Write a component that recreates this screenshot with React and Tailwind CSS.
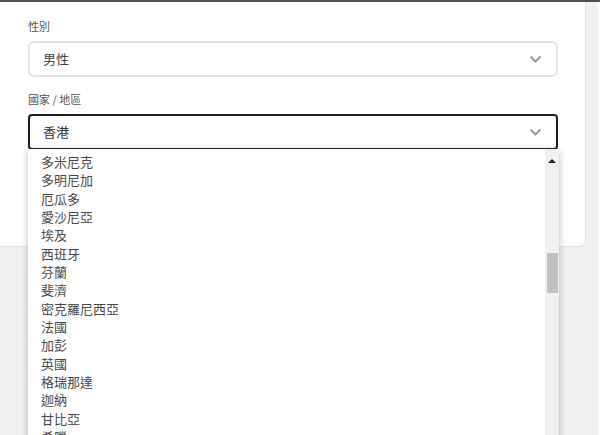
import React from "react";

const countries = [
  "多米尼克",
  "多明尼加",
  "厄瓜多",
  "愛沙尼亞",
  "埃及",
  "西班牙",
  "芬蘭",
  "斐濟",
  "密克羅尼西亞",
  "法國",
  "加彭",
  "英國",
  "格瑞那達",
  "迦納",
  "甘比亞",
  "希臘",
  "幾內亞",
];

function Chevron() {
  return (
    <svg width="13" height="8" viewBox="0 0 13 8" className="shrink-0">
      <polyline points="1.5,1.5 6.5,6.5 11.5,1.5" fill="none" stroke="#9a9a9a" strokeWidth="2" />
    </svg>
  );
}

function CountryList() {
  return (
    <div className="absolute left-[-2px] top-full mt-[1px] w-[531px] h-[300px] bg-white shadow-[0_2px_7px_rgba(0,0,0,0.28)] flex">
      <div className="flex-1 pt-[4px]">
        {countries.map((c) => (
          <div key={c} className="pl-[13px] text-[13px] leading-[18.33px] text-[#484848]">
            {c}
          </div>
        ))}
      </div>
      {/* scrollbar */}
      <div className="w-[14px] bg-[#f0f0f0] flex flex-col items-center">
        <div className="mt-[10px] w-0 h-0 border-l-[4px] border-r-[4px] border-b-[4px] border-l-transparent border-r-transparent border-b-[#222]" />
        <div className="mt-[90px] w-[11px] h-[40px] bg-[#c1c1c1]" />
      </div>
    </div>
  );
}

export default function App() {
  return (
    <div className="w-[600px] h-[435px] overflow-hidden bg-[#f0f0f0] border-t-2 border-[#4f4f4f] flex font-['Noto_Sans_CJK_TC','Noto_Sans_CJK_SC',sans-serif]">
      <div className="w-[598px]">
        <div className="w-[586px] h-[245px] bg-white rounded-br-md border-r border-b border-[#e4e4e4] pl-[28px] pt-[17px]">
          <label className="block text-[11px] leading-[14px] text-[#555]">性別</label>
          <div className="mt-[8px] w-[530px] h-[36px] border-2 border-[#e2e2e2] rounded-md flex items-center justify-between pl-[13px] pr-[14px] text-[13px] text-[#444]">
            <span>男性</span>
            <Chevron />
          </div>
          <label className="block mt-[15px] text-[11px] leading-[14px] text-[#555]">國家 / 地區</label>
          <div className="relative mt-[8px] w-[530px] h-[36px] border-2 border-[#1f1f1f] rounded-[4px] flex items-center justify-between pl-[13px] pr-[14px] text-[13px] text-[#333]">
            <span>香港</span>
            <Chevron />
            <CountryList />
          </div>
        </div>
      </div>
      <div className="w-[2px] bg-[#fbfbfb]" />
    </div>
  );
}
